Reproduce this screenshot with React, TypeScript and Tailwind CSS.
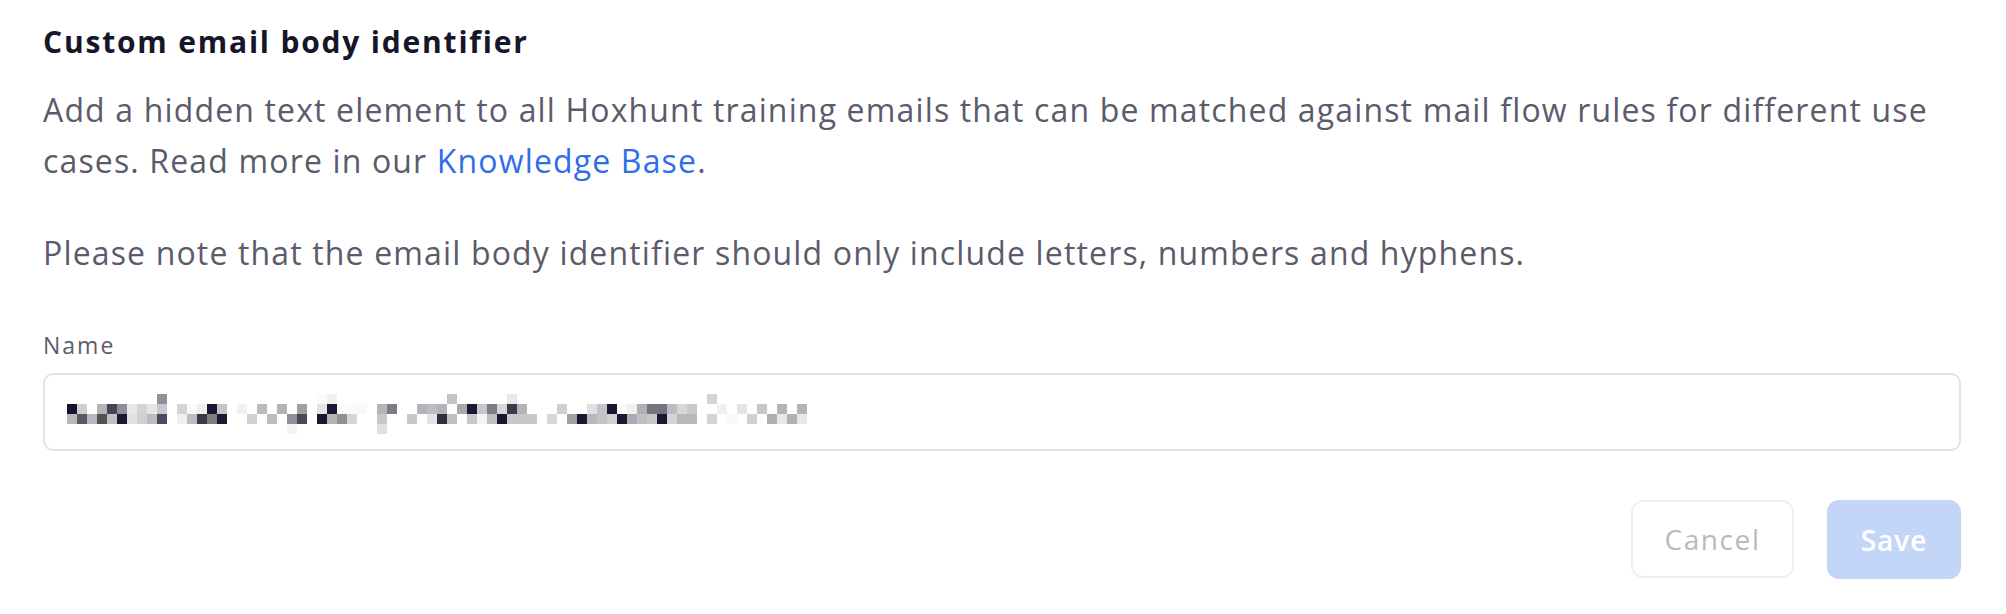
import React from "react"

// censored value in the Name field, drawn as a 10px mosaic
type Cell = [number, number, string]

const cells: Cell[] = [
    // [column, row, colour]  rows: 0 = A, 1 = B, 2 = C, 3 = D
    [0, 1, "#151530"], [0, 2, "#b8b8bc"],
    [1, 1, "#cfcfd2"], [1, 2, "#5a5a66"],
    [2, 2, "#b8b8bc"],
    [3, 1, "#b4b4b8"], [3, 2, "#525258"],
    [4, 1, "#444454"], [4, 2, "#c0c0c2"],
    [5, 1, "#8e8e96"], [5, 2, "#181830"],
    [6, 1, "#e8e8ea"], [6, 2, "#e0e0e2"],
    [7, 1, "#d4d4d6"], [7, 2, "#d0d0d2"],
    [8, 1, "#e6e6e8"], [8, 2, "#bcbcbe"],
    [9, 0, "#909096"], [9, 1, "#c8c8cc"], [9, 2, "#4a4a5e"],
    [11, 1, "#d4d4d6"], [11, 2, "#f0f0f0"],
    [12, 1, "#fafafa"], [12, 2, "#bcbcbe"],
    [13, 1, "#eeeeee"], [13, 2, "#3a3a48"],
    [14, 1, "#181830"], [14, 2, "#7c7c82"],
    [15, 1, "#c4c4c8"], [15, 2, "#1a1a30"],
    [17, 1, "#f2f2f2"],
    [18, 2, "#d0d0d6"],
    [19, 1, "#bcbcbe"],
    [20, 2, "#bcbcc0"],
    [21, 1, "#b4b4b8"],
    [22, 2, "#909094"], [22, 3, "#f4f4f4"],
    [23, 1, "#a0a0a4"], [23, 2, "#4a4a56"],
    [25, 0, "#fafafa"], [25, 1, "#e4e4e6"], [25, 2, "#181830"],
    [26, 0, "#f0f0f0"], [26, 1, "#181830"], [26, 2, "#b4b4b8"],
    [27, 1, "#fafafa"], [27, 2, "#909096"],
    [28, 1, "#fafafa"], [28, 2, "#d6d6d8"],
    [29, 1, "#f8f8f8"],
    [31, 1, "#b4b4b8"], [31, 2, "#c8c8cc"], [31, 3, "#e0e0e0"],
    [32, 1, "#7c7c88"],
    [34, 2, "#c8c8ca"],
    [35, 1, "#b4b4b8"],
    [36, 1, "#bcbcc2"], [36, 2, "#e4e4e6"],
    [37, 1, "#b4b4b8"], [37, 2, "#2e2e40"],
    [38, 0, "#c4c4c6"], [38, 2, "#c0c0c2"],
    [39, 1, "#a8a8ac"],
    [40, 1, "#181830"], [40, 2, "#c8c8cc"],
    [41, 1, "#c8c8cc"], [41, 2, "#f4f4f4"],
    [42, 1, "#7c7c86"], [42, 2, "#c0c0c4"],
    [43, 1, "#d6d6da"], [43, 2, "#181830"],
    [44, 0, "#e8e8ea"], [44, 1, "#3a3a4a"], [44, 2, "#c8c8cc"],
    [45, 1, "#b4b4b8"], [45, 2, "#c8c8cc"],
    [46, 2, "#c8c8cc"],
    [48, 2, "#d8d8da"],
    [49, 1, "#d0d0d2"],
    [50, 2, "#a0a0a4"],
    [51, 2, "#181830"],
    [52, 1, "#e0e0e2"], [52, 2, "#b8b8bc"],
    [53, 1, "#c4c4c8"], [53, 2, "#c4c4c8"],
    [54, 1, "#181830"], [54, 2, "#d0d0d4"],
    [55, 1, "#fafafa"], [55, 2, "#181830"],
    [56, 1, "#f0f0f0"], [56, 2, "#acacb0"],
    [57, 1, "#b0b0b4"], [57, 2, "#c0c0c4"],
    [58, 1, "#747480"], [58, 2, "#c8c8cc"],
    [59, 1, "#747480"], [59, 2, "#181830"],
    [60, 1, "#bcbcc0"], [60, 2, "#d4d4d6"],
    [61, 1, "#d6d6d8"], [61, 2, "#b8b8bc"],
    [62, 1, "#cacace"], [62, 2, "#b8b8bc"],
    [64, 0, "#d4d4d6"], [64, 2, "#d4d4d6"],
    [65, 1, "#f0f0f0"],
    [66, 2, "#f8f8f8"],
    [67, 1, "#e4e4e6"],
    [68, 2, "#d0d0d4"],
    [69, 1, "#c8c8cc"],
    [70, 2, "#b0b0b4"],
    [71, 1, "#b4b4b8"], [71, 2, "#e8e8ea"],
    [72, 2, "#b0b0b4"],
    [73, 1, "#b4b4b8"], [73, 2, "#e8e8ea"],
]

function Mosaic() {
    return (
        <svg width={740} height={40} viewBox="0 0 740 40" className="block">
            {cells.map(([c, r, fill]) => (
                <rect key={`${c}-${r}`} x={c * 10} y={r * 10} width={10} height={10} fill={fill} />
            ))}
        </svg>
    )
}

export default function App() {
    return (
        <div
            className="min-h-[614px] w-full bg-white pl-[43px] pr-[45px] pt-[23px]"
            style={{ fontFamily: '"Open Sans", "Liberation Sans", sans-serif' }}
        >
            <h2 className="text-[30px] font-bold leading-[37px] tracking-[1.8px] text-[#16162a]">
                Custom email body identifier
            </h2>

            <p className="mt-[24px] whitespace-nowrap text-[32px] leading-[51px] tracking-[1.15px] text-[#5b5b6c]">
                Add a hidden text element to all Hoxhunt training emails that can be matched against mail flow rules for different use
                <br />
                cases. Read more in our <a className="text-[#2f6eea]">Knowledge Base</a>.
            </p>

            <p className="mt-[41px] text-[32px] leading-[51px] tracking-[1.15px] text-[#5b5b6c]">
                Please note that the email body identifier should only include letters, numbers and hyphens.
            </p>

            <label className="mt-[52px] block text-[23px] leading-[30px] tracking-[2px] text-[#5c5c6c]">Name</label>
            <div className="mt-[13px] h-[78px] w-full rounded-[10px] border-2 border-[#e3e3e6] pl-[22px] pt-[19px]">
                <Mosaic />
            </div>

            <div className="mt-[49px] flex justify-end gap-[33px]">
                <button className="h-[78px] w-[163px] rounded-[12px] border-2 border-[#f0f0f2] bg-white text-[28px] font-medium tracking-[1.6px] text-[#b9b9c0]">
                    Cancel
                </button>
                <button className="h-[79px] w-[134px] rounded-[12px] bg-[#c4d6f8] text-[28px] font-semibold tracking-[1px] text-white">
                    Save
                </button>
            </div>
        </div>
    )
}
